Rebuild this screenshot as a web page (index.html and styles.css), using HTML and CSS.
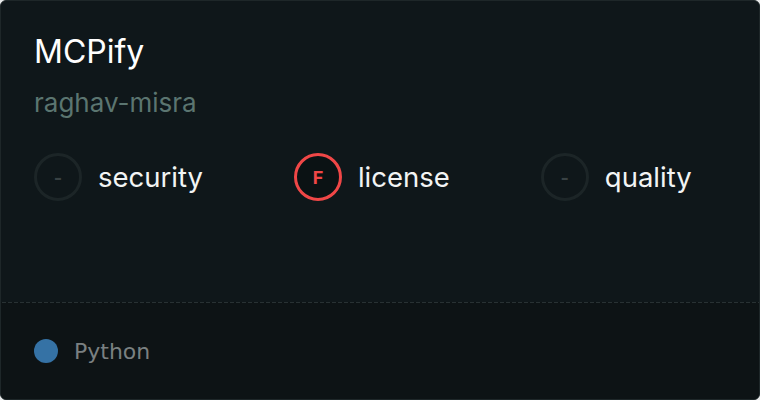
FILE: index.html
```html
<!DOCTYPE html>
<html>
<head>
<meta charset="utf-8">
<link rel="stylesheet" href="styles.css">
</head>
<body>
<div class="card">
  <div class="main">
    <div class="title">MCPify</div>
    <div class="owner">raghav-misra</div>
    <div class="scores">
      <div class="score">
        <div class="badge badge-none">-</div>
        <div class="label">security</div>
      </div>
      <div class="score">
        <div class="badge badge-f">F</div>
        <div class="label">license</div>
      </div>
      <div class="score">
        <div class="badge badge-none">-</div>
        <div class="label">quality</div>
      </div>
    </div>
  </div>
  <div class="footer">
    <span class="lang-dot"></span>
    <span class="lang">Python</span>
  </div>
</div>
</body>
</html>
```
FILE: styles.css
```css
html, body {
  margin: 0;
  padding: 0;
  background: #e8eaea;
}
.card {
  width: 760px;
  height: 400px;
  box-sizing: border-box;
  border: 1px solid #1e2729;
  border-radius: 6px;
  background: #0f171a;
  overflow: hidden;
  display: flex;
  flex-direction: column;
  font-family: Inter, "Noto Sans", sans-serif;
}
.main {
  flex: 1;
  padding: 31px 33px 0;
}
.title {
  font-size: 32px;
  line-height: 40px;
  color: #ffffff;
}
.owner {
  margin-top: 15px;
  font-size: 26px;
  line-height: 32px;
  color: #5b7570;
}
.scores {
  margin-top: 34px;
  display: flex;
  gap: 91px;
}
.score {
  display: flex;
  align-items: center;
  gap: 16px;
}
.badge {
  width: 48px;
  height: 48px;
  box-sizing: border-box;
  border-radius: 50%;
  border: 3px solid #1c2527;
  display: flex;
  align-items: center;
  justify-content: center;
  font-weight: 700;
  font-size: 18px;
}
.badge-none {
  color: #394244;
}
.badge-f {
  border-color: #f04747;
  color: #f04747;
  background: #0b1214;
}
.label {
  font-size: 27.5px;
  color: #f2f4f4;
}
.footer {
  height: 97px;
  box-sizing: border-box;
  background-color: #0d1315;
  background-image: linear-gradient(to right, #283133 4px, transparent 4px);
  background-size: 6px 1px;
  background-repeat: repeat-x;
  background-position: 1px 0;
  padding: 1px 33px 0;
  display: flex;
  align-items: center;
  gap: 16px;
}
.lang-dot {
  width: 24px;
  height: 24px;
  border-radius: 50%;
  background: #3572a5;
}
.lang {
  font-family: "DejaVu Sans", sans-serif;
  font-size: 22px;
  color: #7a8081;
}
```
